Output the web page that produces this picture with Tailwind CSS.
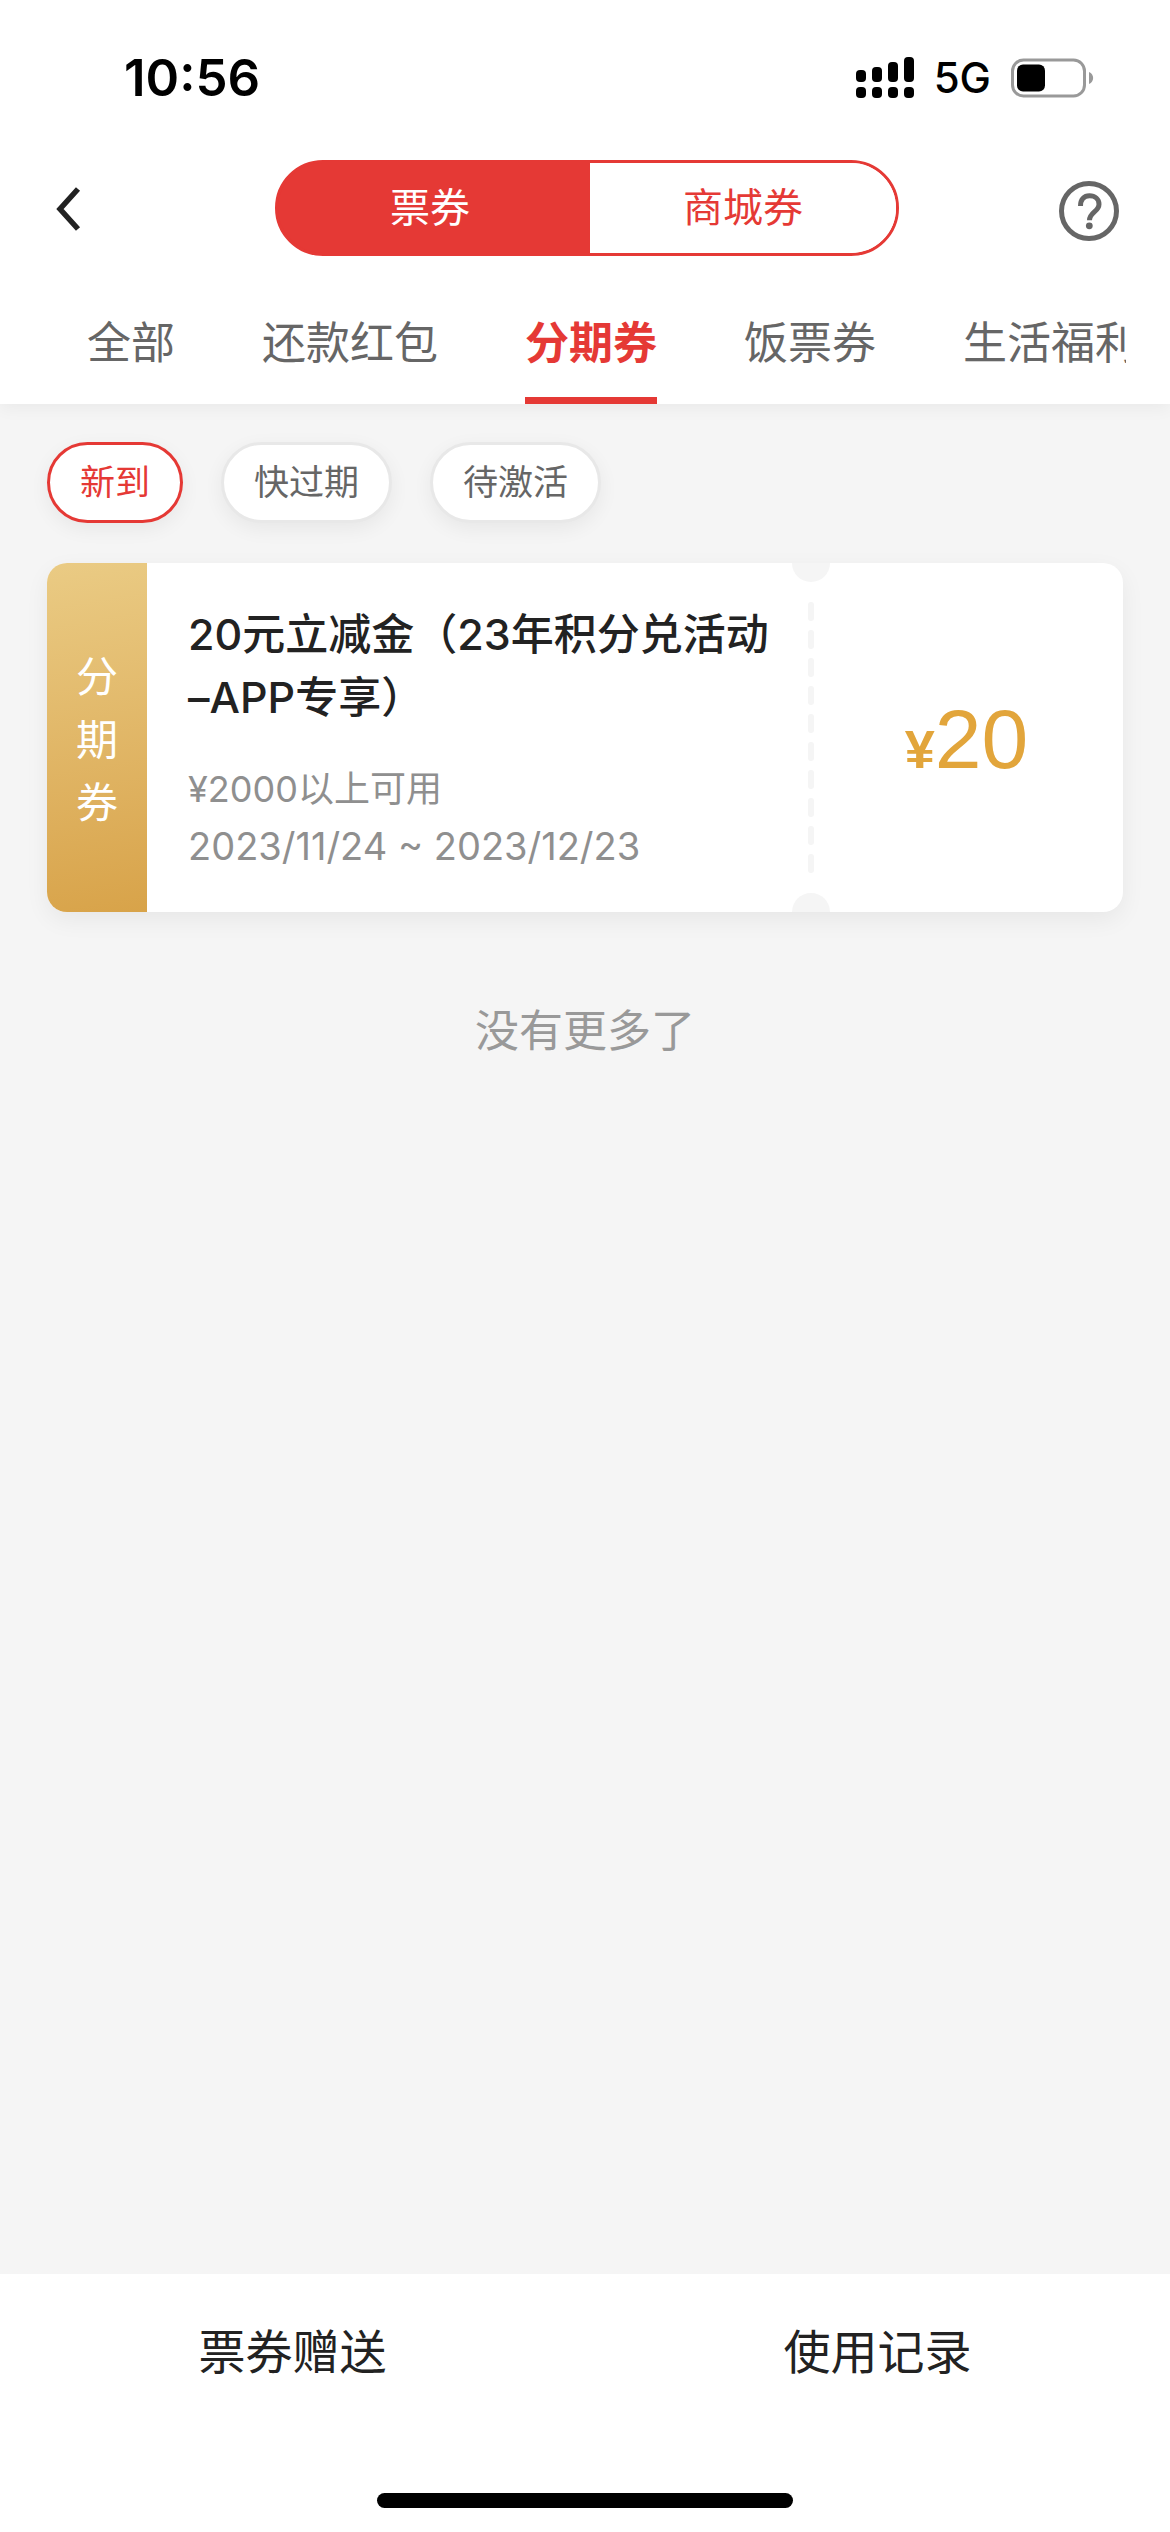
<!DOCTYPE html>
<html lang="zh-CN">
<head>
<meta charset="utf-8">
<meta name="viewport" content="width=device-width, initial-scale=1">
<title>票券</title>
<script src="https://cdn.jsdelivr.net/npm/@tailwindcss/browser@4"></script>
</head>
<body class="flex min-h-screen flex-col bg-[#f5f5f5] font-['Inter','Noto_Sans_CJK_SC',sans-serif] text-[#222]">
  <header class="bg-white shadow-[0_4px_16px_rgba(0,0,0,0.05)]">
    <!-- Status bar -->
    <div class="flex h-36 items-center justify-between pt-3 pr-[76px] pl-[124px]">
      <span class="text-[51px] leading-[60px] font-semibold text-black">10:56</span>
      <div class="flex items-center gap-5 text-black">
        <svg class="h-[42px] w-[58px]" viewBox="0 0 58 42" fill="currentColor" aria-hidden="true">
          <rect x="0" y="13" width="10" height="12" rx="4"/><rect x="16" y="10" width="10" height="15" rx="4"/><rect x="32" y="5" width="10" height="20" rx="4"/><rect x="48" y="0" width="10" height="25" rx="4"/>
          <rect x="0" y="30" width="10" height="11" rx="4"/><rect x="16" y="30" width="10" height="11" rx="4"/><rect x="32" y="30" width="10" height="11" rx="4"/><rect x="48" y="30" width="10" height="11" rx="4"/>
        </svg>
        <span class="text-[42px] leading-[48px] font-medium">5G</span>
        <svg class="h-10 w-[83px]" viewBox="0 0 83 40" aria-hidden="true">
          <rect x="1.5" y="2" width="72" height="36" rx="11" fill="none" stroke="#999" stroke-width="3"/>
          <rect x="6" y="6.500" width="28" height="27" rx="6"/>
          <path d="M78 14c5.500 2 5.500 10 0 12z" fill="#999"/>
        </svg>
      </div>
    </div>
    <!-- Title bar -->
    <div class="flex items-center justify-between pt-4 pr-[51px] pl-[55px]">
      <button type="button" aria-label="返回" class="flex h-24 w-[60px] items-center">
        <svg class="h-12 w-7" viewBox="0 0 28 48" fill="none" stroke="#222" stroke-width="5.500"><path d="M23 5L5 25l18 20"/></svg>
      </button>
      <div class="grid h-24 w-[624px] grid-cols-[52fr_51fr] overflow-hidden rounded-full border-[3px] border-[#e53935] bg-[linear-gradient(90deg,#e53935_50%,#fff_50%)] text-[40px] leading-[60px]">
        <button type="button" class="bg-[#e53935] pr-2 text-white">票券</button>
        <button type="button" class="bg-white text-[#e53935]">商城券</button>
      </div>
      <button type="button" aria-label="帮助" class="pt-1.5">
        <svg class="size-[60px]" viewBox="0 0 60 60" fill="none" stroke="#666" stroke-width="5"><circle cx="30" cy="30" r="27.500"/><path d="M21.500 25C21.500 18.500 25 14.800 30.500 14.800c5.500 0 9.500 3.300 9.500 8.400 0 7.500-9.500 8-9.500 16"/><circle cx="30.300" cy="44.800" r="3.400" fill="#666" stroke="none"/></svg>
      </button>
    </div>
    <!-- Category tabs -->
    <nav class="mr-11 flex gap-[87px] overflow-hidden pl-[87px] pt-[54px] text-[44px] leading-[66px] whitespace-nowrap text-[#666]">
      <a href="#" class="shrink-0 pb-7">全部</a>
      <a href="#" class="shrink-0 pb-7">还款红包</a>
      <a href="#" aria-current="page" class="shrink-0 border-b-[7px] border-[#e53935] pb-[21px] font-bold text-[#e53935]">分期券</a>
      <a href="#" class="shrink-0 pb-7">饭票券</a>
      <a href="#" class="shrink-0 pb-7">生活福利</a>
    </nav>
  </header>

  <main class="flex-1 px-[47px] pt-[38px]">
    <div class="flex gap-[38px] text-[35px] leading-[51px] text-[#666]">
      <button type="button" class="rounded-full border-[3px] border-[#e53935] bg-white px-[30px] py-3 text-[#e53935] shadow-[0_6px_20px_rgba(0,0,0,0.06)]">新到</button>
      <button type="button" class="rounded-full border-[3px] border-[#e8e8e8] bg-white px-[30px] py-3 shadow-[0_6px_20px_rgba(0,0,0,0.06)]">快过期</button>
      <button type="button" class="rounded-full border-[3px] border-[#e8e8e8] bg-white px-[30px] py-3 shadow-[0_6px_20px_rgba(0,0,0,0.06)]">待激活</button>
    </div>

    <!-- Coupon -->
    <article class="mt-10 flex min-h-[349px] rounded-[20px] bg-white shadow-[0_8px_24px_rgba(0,0,0,0.06)]">
      <div class="flex w-[100px] shrink-0 flex-col items-center justify-center rounded-l-[20px] bg-linear-170 from-[#eacb84] to-[#d8a349] pt-1 text-[42px] leading-[63px] text-white">
        <span>分</span><span>期</span><span>券</span>
      </div>
      <div class="flex-1 pt-10 pl-[41px]">
        <h2 class="text-[43px] leading-[63px] font-medium whitespace-nowrap">20元立减金（23年积分兑活动<br>–APP专享）</h2>
        <div class="mt-8 leading-[57px] text-[#8f8f8f]">
          <p class="text-[36px]">¥2000以上可用</p>
          <p class="text-[38px]">2023/11/24 ~ 2023/12/23</p>
        </div>
      </div>
      <div class="flex w-[38px] shrink-0 flex-col items-center justify-between overflow-hidden">
        <span class="h-[19px] w-[38px] rounded-b-full bg-[#f5f5f5]"></span>
        <svg class="h-[272px] w-1.5" viewBox="0 0 6 272" aria-hidden="true"><path d="M3 3V272" stroke="#f5f5f5" stroke-width="6" stroke-linecap="round" stroke-dasharray="13 15"/></svg>
        <span class="h-[19px] w-[38px] rounded-t-full bg-[#f5f5f5]"></span>
      </div>
      <div class="flex w-[293px] shrink-0 items-center justify-center pt-3 pr-5 font-['Liberation_Sans',sans-serif] text-[#e2a53b]">
        <p class="text-[84px] leading-[96px]"><span class="text-[54px] font-bold">¥</span>20</p>
      </div>
    </article>

    <p class="mt-[86px] text-center text-[44px] leading-[66px] text-[#999]">没有更多了</p>
  </main>

  <footer class="bg-white">
    <div class="grid grid-cols-2 text-[47px] leading-[70px]">
      <button type="button" class="py-[43px]">票券赠送</button>
      <button type="button" class="py-[43px]">使用记录</button>
    </div>
    <div class="mx-auto mt-[63px] mb-6 h-[15px] w-[416px] rounded-full bg-black"></div>
  </footer>
</body>
</html>
